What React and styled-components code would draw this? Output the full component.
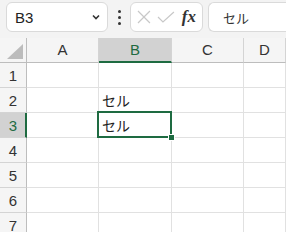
import React from "react";
import styled, { createGlobalStyle } from "styled-components";

const GlobalStyle = createGlobalStyle`
  html, body {
    margin: 0;
    padding: 0;
    background: #ffffff;
    overflow: hidden;
  }
  * {
    box-sizing: border-box;
  }
`;

const GREEN = "#1e6b41";

const Page = styled.div`
  width: 286px;
  height: 232px;
  overflow: hidden;
  font-family: "Liberation Sans", Arial, sans-serif;
`;

const Toolbar = styled.div`
  height: 38px;
  background: #f3f3f3;
  display: flex;
  align-items: flex-start;
  padding: 2px 0 0 6px;
`;

const NameBox = styled.div`
  width: 102px;
  height: 30px;
  background: #fff;
  border: 1px solid #dadada;
  border-radius: 6px;
  display: flex;
  align-items: center;
  justify-content: space-between;
  padding: 0 6px 0 8px;
  font-size: 15px;
  color: #222;
`;

const Dots = styled.div`
  width: 22px;
  height: 30px;
  display: flex;
  flex-direction: column;
  align-items: center;
  justify-content: center;
  gap: 3px;
  span {
    width: 3px;
    height: 3px;
    border-radius: 50%;
    background: #333;
  }
`;

const FxBox = styled.div`
  width: 73px;
  height: 30px;
  background: #fff;
  border: 1px solid #dadada;
  border-radius: 6px;
  display: flex;
  align-items: center;
  padding: 0 6px 0 5px;
  gap: 5px;
`;

const FxLabel = styled.span`
  font-family: "Liberation Serif", "Times New Roman", serif;
  font-style: italic;
  font-weight: bold;
  font-size: 17px;
  color: #333;
  margin-left: 2px;
`;

const FormulaBox = styled.div`
  flex: 1;
  height: 30px;
  margin-left: 5px;
  background: #fff;
  border: 1px solid #dadada;
  border-right: none;
  border-radius: 6px 0 0 6px;
  display: flex;
  align-items: center;
  padding-left: 14px;
  font-family: "Noto Sans CJK JP", sans-serif;
  font-size: 13px;
  color: #333;
`;

const Sheet = styled.div`
  display: grid;
  grid-template-columns: 27px 72px 73px 72px 1fr;
  grid-auto-rows: 25px;
`;

const HeaderCell = styled.div`
  background: ${(p) => (p.$active ? "#d2d2d2" : "#f5f5f5")};
  color: ${(p) => (p.$active ? GREEN : "#333")};
  border-right: 1px solid #d4d4d4;
  border-bottom: ${(p) => (p.$active ? `2px solid ${GREEN}` : "1px solid #bdbdbd")};
  display: flex;
  align-items: center;
  justify-content: center;
  font-size: 15px;
  padding-bottom: ${(p) => (p.$active ? "0" : "1px")};
`;

const Corner = styled.div`
  background: #f5f5f5;
  border-right: 1px solid #bdbdbd;
  border-bottom: 1px solid #bdbdbd;
  display: flex;
  align-items: flex-end;
  justify-content: flex-end;
  padding: 0 3px 3px 0;
`;

const RowHead = styled.div`
  background: ${(p) => (p.$active ? "#d2d2d2" : "#f5f5f5")};
  color: ${(p) => (p.$active ? GREEN : "#333")};
  border-right: ${(p) => (p.$active ? `2px solid ${GREEN}` : "1px solid #bdbdbd")};
  border-bottom: 1px solid #d4d4d4;
  display: flex;
  align-items: center;
  justify-content: center;
  font-size: 15px;
  padding-left: ${(p) => (p.$active ? "1px" : "0")};
`;

const Cell = styled.div`
  position: relative;
  background: #fff;
  border-right: 1px solid #e1e1e1;
  border-bottom: 1px solid #e1e1e1;
  display: flex;
  align-items: center;
  padding: 0 0 0 3px;
  font-family: "Noto Sans CJK JP", sans-serif;
  font-size: 14px;
  color: #222;
`;

const Selection = styled.div`
  position: absolute;
  z-index: 2;
  top: -2px;
  left: -2px;
  right: -1px;
  bottom: -1px;
  border: 2px solid ${GREEN};
  pointer-events: none;
`;

const Handle = styled.div`
  position: absolute;
  right: -5px;
  bottom: -5px;
  width: 7px;
  height: 7px;
  background: ${GREEN};
  border: 1px solid #fff;
`;

const columns = ["A", "B", "C", "D"];
const rows = [1, 2, 3, 4, 5, 6, 7];
const values = { B2: "セル", B3: "セル" };

export default function App() {
  return (
    <Page>
      <GlobalStyle />
      <Toolbar>
        <NameBox>
          <span>B3</span>
          <svg width="10" height="10" viewBox="0 0 10 10">
            <path d="M2 3.5 L5 6.5 L8 3.5" fill="none" stroke="#333" strokeWidth="1.6" />
          </svg>
        </NameBox>
        <Dots>
          <span />
          <span />
          <span />
        </Dots>
        <FxBox>
          <svg width="16" height="16" viewBox="0 0 16 16">
            <path d="M2 2 L14 14 M14 2 L2 14" stroke="#c8c8c8" strokeWidth="1.2" />
          </svg>
          <svg width="18" height="16" viewBox="0 0 18 16">
            <path d="M1 8 L6 13 L17 3" fill="none" stroke="#c8c8c8" strokeWidth="1.2" />
          </svg>
          <FxLabel>fx</FxLabel>
        </FxBox>
        <FormulaBox>セル</FormulaBox>
      </Toolbar>
      <Sheet>
        <Corner>
          <svg width="16" height="15" viewBox="0 0 16 15">
            <path d="M16 0 L16 15 L0 15 Z" fill="#bcbcbc" />
          </svg>
        </Corner>
        {columns.map((c) => (
          <HeaderCell key={c} $active={c === "B"}>
            {c}
          </HeaderCell>
        ))}
        {rows.map((r) => (
          <React.Fragment key={r}>
            <RowHead $active={r === 3}>{r}</RowHead>
            {columns.map((c) => {
              const id = c + r;
              return (
                <Cell key={id}>
                  {values[id]}
                  {id === "B3" && (
                    <Selection>
                      <Handle />
                    </Selection>
                  )}
                </Cell>
              );
            })}
          </React.Fragment>
        ))}
      </Sheet>
    </Page>
  );
}
